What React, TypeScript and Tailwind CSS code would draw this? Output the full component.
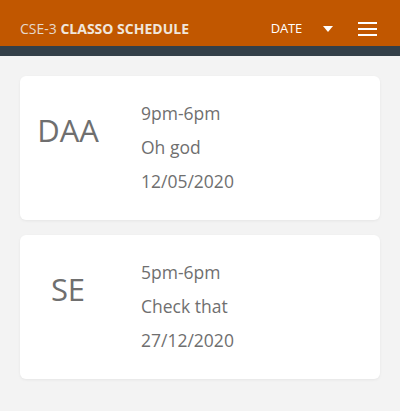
import React from 'react';

interface Lecture {
  subject: string;
  time: string;
  note: string;
  date: string;
}

const lectures: Lecture[] = [
  { subject: 'DAA', time: '9pm-6pm', note: 'Oh god', date: '12/05/2020' },
  { subject: 'SE', time: '5pm-6pm', note: 'Check that', date: '27/12/2020' },
];

const LectureCard: React.FC<{ item: Lecture }> = ({ item }) => (
  <div className="bg-white rounded-md shadow-[0_1px_3px_rgba(0,0,0,0.06)] flex items-center pl-4 py-5 h-[144px]">
    <div className="w-[64px] text-center text-[31px] text-[#6f6f6f] leading-none -mt-[36px]">{item.subject}</div>
    <div className="ml-[41px] -mt-[3px] flex flex-col text-[17.5px] text-[#6f6f6f] leading-[34px]">
      <span>{item.time}</span>
      <span>{item.note}</span>
      <span>{item.date}</span>
    </div>
  </div>
);

export default function App() {
  return (
    <div className="min-h-[411px] bg-[#f3f3f3]" style={{ fontFamily: '"Open Sans", "Noto Sans", sans-serif' }}>
      <header className="h-[46px] bg-[#c15700] flex items-center pt-[11px] pl-5 pr-[23px] text-[14px]">
        <div className="text-[#e6d9cc]">
          CSE-3 <span className="font-bold text-[#f0e6dc]">CLASSO SCHEDULE</span>
        </div>
        <div className="ml-auto flex items-center text-white">
          <span className="text-[13px] tracking-[-0.2px]">DATE</span>
          <svg className="ml-[21px]" width="10" height="6" viewBox="0 0 10 6">
            <path d="M0 0h10L5 6z" fill="#fff" />
          </svg>
          <svg className="ml-[25px]" width="19" height="14" viewBox="0 0 19 14">
            <rect x="0" y="0" width="19" height="2" fill="#fff" />
            <rect x="0" y="6" width="19" height="2" fill="#fff" />
            <rect x="0" y="12" width="19" height="2" fill="#fff" />
          </svg>
        </div>
      </header>
      <div className="h-[10px] bg-[#333f48]" />
      <main className="px-5 pt-[20px] flex flex-col gap-[15px]">
        {lectures.map(l => (
          <LectureCard key={l.subject} item={l} />
        ))}
      </main>
    </div>
  );
}
